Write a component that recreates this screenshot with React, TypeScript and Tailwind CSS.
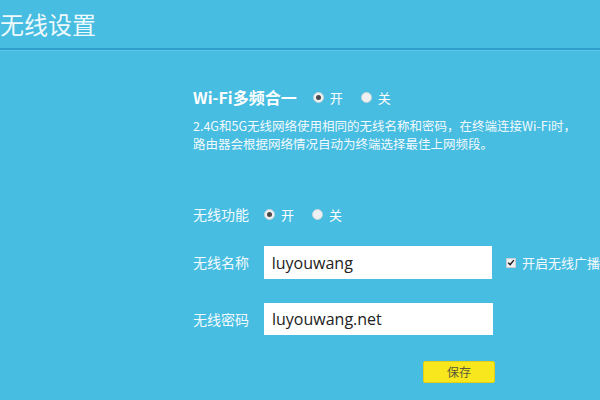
import { useState } from 'react';

const cjk = { fontFamily: '"Noto Sans CJK SC", "Noto Sans", sans-serif' };

const Radio = ({ checked, label, onClick }: { checked: boolean; label: string; onClick: () => void }) => (
  <button type="button" onClick={onClick} className="flex items-center gap-[6px]">
    <span className="flex h-[11px] w-[11px] items-center justify-center rounded-full border border-[#c9d4da] bg-[#eef0f2]">
      {checked && <span className="h-[5px] w-[5px] rounded-full bg-[#4a4a4a]" />}
    </span>
    <span className="text-[13px] leading-none text-white">{label}</span>
  </button>
);

const App = () => {
  const [multiBand, setMultiBand] = useState(true);
  const [wireless, setWireless] = useState(true);
  const [ssid, setSsid] = useState('luyouwang');
  const [password, setPassword] = useState('luyouwang.net');
  const [broadcast, setBroadcast] = useState(true);

  return (
    <div className="h-[400px] w-[600px] overflow-hidden bg-[#47bde1] text-white" style={cjk}>
      {/* 顶部标题 */}
      <div className="h-[50px] border-b-2 border-[#2e9fcb]">
        <h1 className="pt-[9px] text-[24px] leading-[30px] text-[#eef9fd]">无线设置</h1>
      </div>
      <div className="h-px bg-[#5cc6e6]" />

      <div className="pl-[193px]">
        {/* Wi-Fi 多频合一 */}
        <div className="mt-[35px] flex h-[22px] items-center">
          <span className="text-[16px] font-bold text-white">Wi-Fi多频合一</span>
          <div className="ml-[16px] flex items-center gap-[18px]">
            <Radio checked={multiBand} label="开" onClick={() => setMultiBand(true)} />
            <Radio checked={!multiBand} label="关" onClick={() => setMultiBand(false)} />
          </div>
        </div>
        <p className="mt-[9px] text-[12.5px] leading-[18px] text-[#f2fafd]">
          2.4G和5G无线网络使用相同的无线名称和密码，在终端连接Wi-Fi时，
          <br />
          路由器会根据网络情况自动为终端选择最佳上网频段。
        </p>

        {/* 无线功能 */}
        <div className="mt-[51px] flex h-[20px] items-center">
          <span className="w-[71px] text-[14px] text-[#f2fafd]">无线功能</span>
          <div className="flex items-center gap-[18px]">
            <Radio checked={wireless} label="开" onClick={() => setWireless(true)} />
            <Radio checked={!wireless} label="关" onClick={() => setWireless(false)} />
          </div>
        </div>

        {/* 无线名称 */}
        <div className="mt-[22px] flex items-center">
          <span className="w-[71px] text-[14px] text-[#f2fafd]">无线名称</span>
          <input
            value={ssid}
            onChange={(e) => setSsid(e.target.value)}
            className="h-[33px] w-[229px] bg-white px-[8px] text-[16px] text-[#222] outline-none"
            style={{ fontFamily: '"Open Sans", "Noto Sans", sans-serif' }}
          />
          <label className="ml-[14px] flex items-center gap-[6px] whitespace-nowrap">
            <span
              onClick={() => setBroadcast(!broadcast)}
              className="flex h-[10px] w-[10px] items-center justify-center border border-[#c7ccd0] bg-[#eef0f2]"
            >
              {broadcast && (
                <svg viewBox="0 0 10 10" className="h-[9px] w-[9px]">
                  <path d="M1.5 5.2 L4 7.6 L8.6 2" fill="none" stroke="#222" strokeWidth="1.8" />
                </svg>
              )}
            </span>
            <span className="text-[13px] text-[#f2fafd]">开启无线广播</span>
          </label>
        </div>

        {/* 无线密码 */}
        <div className="mt-[24px] flex items-center">
          <span className="w-[71px] text-[14px] text-[#f2fafd]">无线密码</span>
          <input
            value={password}
            onChange={(e) => setPassword(e.target.value)}
            className="h-[32px] w-[229px] bg-white px-[8px] text-[16px] text-[#222] outline-none"
            style={{ fontFamily: '"Open Sans", "Noto Sans", sans-serif' }}
          />
        </div>

        <div className="mt-[26px] flex w-[302px] justify-end">
          <button className="h-[22px] w-[72px] rounded-[2px] border border-[#e0cf14] bg-[#f8e71c] text-[12px] text-[#5a5a3a]">
            保存
          </button>
        </div>
      </div>
    </div>
  );
};

export default App;
